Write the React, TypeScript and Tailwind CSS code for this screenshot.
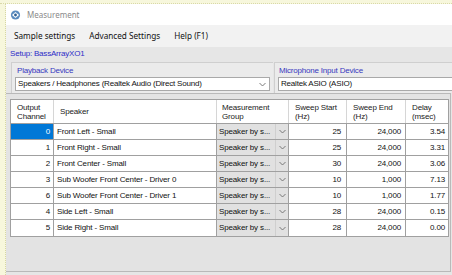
import React from "react";

const rows = [
  { ch: "0", sp: "Front Left - Small", ss: "25", se: "24,000", d: "3.54" },
  { ch: "1", sp: "Front Right - Small", ss: "25", se: "24,000", d: "3.31" },
  { ch: "2", sp: "Front Center - Small", ss: "30", se: "24,000", d: "3.06" },
  { ch: "3", sp: "Sub Woofer Front Center - Driver 0", ss: "10", se: "1,000", d: "7.13" },
  { ch: "6", sp: "Sub Woofer Front Center - Driver 1", ss: "10", se: "1,000", d: "1.77" },
  { ch: "4", sp: "Side Left - Small", ss: "28", se: "24,000", d: "0.15" },
  { ch: "5", sp: "Side Right - Small", ss: "28", se: "24,000", d: "0.00" },
];

const Chevron = ({ className = "" }: { className?: string }) => (
  <svg width="7" height="5" viewBox="0 0 7 5" className={className}>
    <path d="M0.5 1 L3.5 4 L6.5 1" fill="none" stroke="#6d6d6d" strokeWidth="0.9" />
  </svg>
);

export default function App() {
  const sans = { fontFamily: '"Liberation Sans", Arial, sans-serif' };
  const ui = { fontFamily: '"Noto Sans", "Open Sans", sans-serif' };
  return (
    <div className="w-[452px] h-[275px] overflow-hidden bg-[#f7f7dc] flex flex-col">
      <div className="h-[4px] shrink-0 border-b border-dotted border-[#d9d9a8]" />
      <div className="flex flex-1 min-h-0">
        <div className="w-[6px] shrink-0 border-r border-dotted border-[#d6d6a4]" />
        <div className="flex-1 flex flex-col min-w-0 bg-[#e6e6e6]">
          {/* title bar */}
          <div className="h-[21px] shrink-0 bg-white flex items-center pl-[4px] gap-[6px]" style={ui}>
            <svg width="11" height="10" viewBox="0 0 11 10">
              <circle cx="5.5" cy="5" r="4.6" fill="#5b8cc0" />
              <path d="M2 5 L5.5 2 L9 5 L5.5 8 Z" fill="#ffffff" />
              <circle cx="5.5" cy="5" r="1.4" fill="#2e5f93" />
            </svg>
            <span className="text-[8px] text-[#8a8a8a] leading-none">Measurement</span>
          </div>
          {/* menu */}
          <div className="h-[22px] shrink-0 bg-[#f2f2f2] flex items-center text-[8.2px] text-[#111] pl-[8px] gap-[14px]" style={ui}>
            <span>Sample settings</span>
            <span>Advanced Settings</span>
            <span>Help (F1)</span>
          </div>
          {/* setup */}
          <div className="h-[11px] shrink-0 flex items-center pl-[4px] text-[8px] tracking-[-0.2px] text-[#2d2dc8] leading-none pt-[3px]" style={sans}>
            Setup: BassArrayXO1
          </div>
          {/* devices */}
          <div className="h-[35px] shrink-0 flex pt-[4px]" style={sans}>
            <div className="ml-[5px] w-[262px] border-t border-l border-[#cfcfcf] bg-[#ebebeb] flex flex-col px-[3px] pt-[2px]">
              <div className="h-[11px] text-[8px] tracking-[-0.2px] text-[#3838c0] leading-none flex items-center pl-[2px]">Playback Device</div>
              <div className="mt-[1px] h-[14px] bg-white border border-[#a9a9a9] flex items-center justify-between pl-[2px] pr-[3px] text-[8px] tracking-[-0.2px] text-[#111]">
                <span>Speakers / Headphones (Realtek Audio (Direct Sound)</span>
                <Chevron />
              </div>
            </div>
            <div className="flex-1 ml-[1px] border-t border-l border-[#cfcfcf] bg-[#ebebeb] flex flex-col pl-[3px] pt-[2px]">
              <div className="h-[11px] text-[8px] tracking-[-0.2px] text-[#3838c0] leading-none flex items-center pl-[1px]">Microphone Input Device</div>
              <div className="mt-[1px] h-[14px] bg-white border border-r-0 border-[#a9a9a9] flex items-center pl-[2px] text-[8px] tracking-[-0.2px] text-[#111]">
                Realtek ASIO (ASIO)
              </div>
            </div>
          </div>
          {/* table panel */}
          <div className="flex-1 min-h-0 flex flex-col">
            <div className="h-[179px] w-[445px] shrink-0 border-t border-r border-b border-[#b9b9b9] bg-[#e3e3e3] pt-[5px] pl-[4px]" style={sans}>
              <div className="w-[439px] border border-[#a0a0a0] bg-white text-[8px] tracking-[-0.15px] text-[#111]">
                {/* header */}
                <div className="flex h-[24px] border-b border-[#a0a0a0] leading-[9px] text-[#222]">
                  <div className="w-[43px] border-r border-[#d6d6d6] pl-[6px] pt-[3px]">Output<br />Channel</div>
                  <div className="w-[163px] border-r border-[#d6d6d6] pl-[6px] flex items-center">Speaker</div>
                  <div className="w-[72px] border-r border-[#d6d6d6] pl-[5px] pt-[3px]">Measurement<br />Group</div>
                  <div className="w-[58px] border-r border-[#d6d6d6] pl-[6px] pt-[3px]">Sweep Start<br />(Hz)</div>
                  <div className="w-[59px] border-r border-[#d6d6d6] pl-[6px] pt-[3px]">Sweep End<br />(Hz)</div>
                  <div className="flex-1 pl-[6px] pt-[3px]">Delay<br />(msec)</div>
                </div>
                {rows.map((r, i) => (
                  <div key={i} className={`flex h-[16px] ${i < rows.length - 1 ? "border-b" : ""} border-[#a0a0a0] leading-none`}>
                    <div className={`w-[43px] border-r border-[#a0a0a0] flex items-center justify-end pr-[3px] ${i === 0 ? "bg-[#0078d7] text-white" : ""}`}>{r.ch}</div>
                    <div className="w-[163px] border-r border-[#a0a0a0] flex items-center pl-[3px]">{r.sp}</div>
                    <div className="w-[72px] border-r border-[#a0a0a0] flex bg-[#e1e1e1]">
                      <div className="flex-1 flex items-center pl-[2px] border-r border-[#cfcfcf] overflow-hidden whitespace-nowrap">Speaker by s...</div>
                      <div className="w-[12px] flex items-center justify-center"><Chevron /></div>
                    </div>
                    <div className="w-[58px] border-r border-[#a0a0a0] flex items-center justify-end pr-[5px]">{r.ss}</div>
                    <div className="w-[59px] border-r border-[#a0a0a0] flex items-center justify-end pr-[4px]">{r.se}</div>
                    <div className="flex-1 flex items-center justify-end pr-[3px]">{r.d}</div>
                  </div>
                ))}
              </div>
            </div>
          </div>
        </div>
      </div>
    </div>
  );
}
